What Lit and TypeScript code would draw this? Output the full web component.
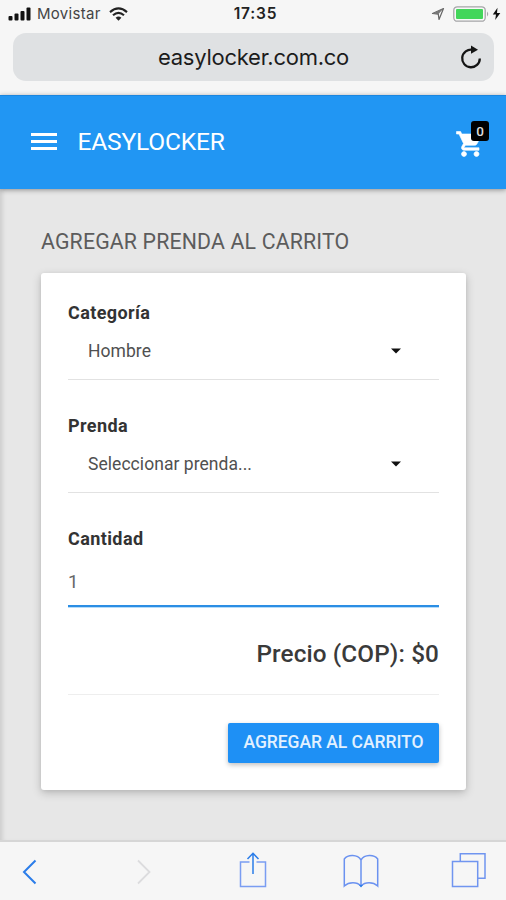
import { LitElement, html, css, svg } from "lit";
import { customElement, property, state } from "lit/decorators.js";

@customElement("status-bar")
class StatusBar extends LitElement {
  static styles = css`
    :host { display: grid; grid-template-columns: 1fr auto 1fr; align-items: center; box-sizing: border-box; height: 28px; padding: 0 5px 0 8px; font-family: Inter, sans-serif; color: #111; }
    .side { display: flex; align-items: center; height: 28px; }
    .end { justify-content: flex-end; }
    .carrier { font-size: 15px; line-height: 28px; margin-left: 6px; color: #444; letter-spacing: 0.3px; }
    .time { font-size: 15.5px; line-height: 28px; font-weight: 600; letter-spacing: 0.8px; margin-left: 2px; color: #222; }
    .wifi { margin-left: 8px; }
    .battery { margin-left: 8px; }
    svg { display: block; }
  `;
  render() {
    return html`
      <div class="side">
        <svg width="23" height="14" viewBox="0 0 23 14" fill="#111">
          <rect x=".5" y="9" width="4" height="4.5" rx="1" /><rect x="6.5" y="6.5" width="4" height="7" rx="1" />
          <rect x="12.5" y="4" width="4" height="9.5" rx="1" /><rect x="18.5" y=".5" width="4" height="13" rx="1" />
        </svg>
        <span class="carrier">Movistar</span>
        <svg class="wifi" width="19" height="14" viewBox="0 0 19 14" fill="none" stroke="#222" stroke-width="2.1">
          <path d="M1 5.1Q9.500-2.300 18 5.100" /><path d="M4 8.300Q9.500 3.300 15 8.300" />
          <path d="M6.600 10.700L9.500 13.700L12.400 10.700Q9.500 8.300 6.600 10.700Z" fill="#222" stroke="none" />
        </svg>
      </div>
      <span class="time">17:35</span>
      <div class="side end">
        <svg width="14" height="14" viewBox="0 0 14 14"><path d="M1.500 6.500L12.500 1.500L8 12.500L7.300 7.200Z" fill="none" stroke="#666" stroke-width="1.200" stroke-linejoin="round" /><path d="M12.500 1.500L7.300 7.200L1.500 6.500Z" fill="#777" /></svg>
        <svg class="battery" width="48" height="16" viewBox="0 0 48 16">
          <rect x=".8" y=".8" width="31.400" height="14.400" rx="3.500" fill="#f8f8f8" stroke="#a5a5a8" stroke-width="1.300" />
          <rect x="3" y="3" width="27" height="10" rx="1" fill="#43d65b" />
          <path d="M34 5.500Q36.500 8 34 10.500Z" fill="#a5a5a8" />
          <path d="M44.500 1.800L39.800 8.600H43L42.200 14L47.300 6.900H44Z" fill="#111" />
        </svg>
      </div>`;
  }
}

@customElement("address-bar")
class AddressBar extends LitElement {
  static styles = css`
    :host { display: block; padding: 5px 12px 14px 13px; }
    .field { display: grid; grid-template-columns: 40px 1fr 40px; align-items: center; height: 48px; border-radius: 13px; background: #dfe1e3; }
    .host { text-align: center; font: 22px/48px Inter, sans-serif; color: #1c1c1c; letter-spacing: -0.25px; grid-column: 2; }
    svg { display: block; margin-left: 5px; margin-top: 1px; }
  `;
  render() {
    return html`<div class="field">
      <span class="host">easylocker.com.co</span>
      <svg width="24" height="26" viewBox="0 0 24 26"><path d="M13.500 4.800A8.800 8.800 0 1 0 20.800 13.500" fill="none" stroke="#151515" stroke-width="2.300" /><path d="M12 .5L19 4.700L12 8.800Z" fill="#151515" /></svg>
    </div>`;
  }
}

@customElement("site-header")
class SiteHeader extends LitElement {
  @property({ type: Number }) count = 0;
  static styles = css`
    :host { display: flex; align-items: center; box-sizing: border-box; height: 94px; padding: 0 17px 2px 31px; background: #2196f3; border-top: 1px solid #1b86df; box-shadow: 0 1px 5px rgba(0, 0, 0, 0.38); position: relative; z-index: 1; font-family: Roboto, sans-serif; color: #fff; }
    .menu { display: grid; gap: 4px; width: 26px; }
    .menu i { height: 3px; background: #fff; }
    .brand { margin-left: 20.500px; font-size: 24.500px; line-height: 32px; letter-spacing: -0.15px; }
    .cart { position: relative; margin-left: auto; width: 33px; height: 40px; }
    .cart svg { display: block; margin-top: 7px; }
    .badge { position: absolute; right: 0; top: -1px; width: 18px; height: 20px; border-radius: 3px; background: #000; color: #ddd; text-align: center; font-size: 13.500px; line-height: 20px; font-weight: 500; }
  `;
  render() {
    return html`
      <div class="menu"><i></i><i></i><i></i></div>
      <span class="brand">EASYLOCKER</span>
      <div class="cart">
        <svg width="30" height="30" viewBox="0.6 0 24 24" fill="#fff" stroke="#fff" stroke-width=".5"><path d="M7 18c-1.100 0-1.990.9-1.990 2S5.900 22 7 22s2-.9 2-2-.9-2-2-2zM1 2v2h2l3.600 7.590-1.350 2.450c-.16.280-.25.610-.25.960 0 1.100.9 2 2 2h12v-2H7.420c-.14 0-.25-.11-.25-.25l.03-.12.900-1.630h7.450c.75 0 1.410-.41 1.750-1.030l3.580-6.490c.08-.14.120-.31.120-.48 0-.55-.45-1-1-1H5.210l-.94-2H1zm16 16c-1.100 0-1.990.9-1.990 2s.89 2 1.990 2 2-.9 2-2-.9-2-2-2z" /></svg>
        <span class="badge">${this.count}</span>
      </div>`;
  }
}

@customElement("select-field")
class SelectField extends LitElement {
  @property() label = "";
  @property() value = "";
  static styles = css`
    :host { display: block; height: 113px; font-family: Roboto, sans-serif; }
    .label { font-size: 18px; line-height: 24px; font-weight: 700; color: #333; letter-spacing: 0.4px; }
    .control { display: flex; align-items: center; justify-content: space-between; box-sizing: border-box; height: 55px; padding: 0 38px 3px 20px; border-bottom: 1.500px solid #e2e2e2; font-size: 17.500px; color: #505050; letter-spacing: 0.05px; }
  `;
  render() {
    return html`<div class="label">${this.label}</div>
      <div class="control"><span>${this.value}</span><svg width="10" height="6" viewBox="0 0 10 6"><path d="M0 .5H10L5 5.500Z" fill="#111" /></svg></div>`;
  }
}

@customElement("cart-form")
class CartForm extends LitElement {
  @state() private quantity = 1;
  @state() private price = 0;
  static styles = css`
    :host { display: block; box-sizing: border-box; height: 517px; padding: 28px 27px 0; background: #fff; border-radius: 3px; box-shadow: 0 3px 10px rgba(0, 0, 0, 0.2), 0 1px 4px rgba(0, 0, 0, 0.06); font-family: Roboto, sans-serif; }
    .label { font-size: 18px; line-height: 24px; font-weight: 700; color: #333; letter-spacing: 0.4px; }
    .quantity { box-sizing: border-box; height: 56px; padding-top: 7px; border-bottom: 2px solid #2b8ee4; box-shadow: 0 1px 0 #b5dcfa; font-size: 18.500px; line-height: 48px; color: #666; }
    .price { box-sizing: border-box; height: 88px; padding-top: 31px; border-bottom: 1px solid #eee; text-align: right; font-size: 24.300px; line-height: 32px; font-weight: 500; color: #3a3a3a; letter-spacing: 0.12px; }
    .actions { display: flex; justify-content: flex-end; padding-top: 28px; }
    .submit { width: 211px; height: 40px; padding: 0 0 2px; border: 0; border-radius: 2px; background: #1e90f5; color: #e2f1ff; font: 500 17.500px/38px Roboto, sans-serif; letter-spacing: -0.05px; box-shadow: 0 2px 5px rgba(0, 0, 0, 0.25); white-space: nowrap; }
  `;
  render() {
    return html`
      <select-field label="Categoría" value="Hombre"></select-field>
      <select-field label="Prenda" value="Seleccionar prenda..."></select-field>
      <div class="label">Cantidad</div>
      <div class="quantity">${this.quantity}</div>
      <div class="price">Precio (COP): $${this.price}</div>
      <div class="actions"><button class="submit">AGREGAR AL CARRITO</button></div>`;
  }
}

const icons = [
  svg`<path d="M16.500 4.500L5 16L16.500 27.500" stroke="#2b7de9" stroke-width="2" />`,
  svg`<path d="M7 4.500L18.500 16L7 27.500" stroke="#dcdcde" stroke-width="1.800" />`,
  svg`<path d="M14.500 10H5.500V34.500H30.500V10H21.500" stroke="#7a9df2" /><path d="M18 22V1.500M12.500 7L18 1.300L23.500 7" stroke="#2b7de9" />`,
  svg`<path d="M18 8C14.500 2.300 5 2.300 1.300 7V34C6 29.800 14 29.800 18 34C22 29.800 30 29.800 34.700 34V7C31 2.300 21.500 2.300 18 8V34" stroke="#6b92f0" /><path d="M16 33H20L18 35.500Z" fill="#2b7de9" />`,
  svg`<path d="M1.500 9.500H26.700V34.500H1.500ZM9.300 9.500V1.800H34V26.300H26.700" stroke="#7095f0" />`,
];

@customElement("browser-toolbar")
class BrowserToolbar extends LitElement {
  static styles = css`
    :host { display: flex; box-sizing: border-box; height: 60px; padding: 10px 0 0 19px; background: #f6f6f6; border-top: 2px solid #d6d6d6; }
    svg { display: block; flex: none; fill: none; stroke-width: 1.500; }
    .arrow { margin-top: 4px; }
    .arrow + .arrow { margin-left: 88px; margin-right: 8px; }
    .tool { margin-left: 72px; }
  `;
  render() {
    return icons.map((icon, n) => n < 2
      ? html`<svg class="arrow" width="24" height="36" viewBox="0 0 24 36">${icon}</svg>`
      : html`<svg class="tool" width="36" height="36" viewBox="0 0 36 36">${icon}</svg>`);
  }
}

@customElement("app-root")
class AppRoot extends LitElement {
  static styles = css`
    :host { display: flex; flex-direction: column; width: 506px; height: 900px; overflow: hidden; background: #f6f6f6; }
    main { flex: 1; box-sizing: border-box; padding: 37px 40px 0 41px; background: #e7e7e7; box-shadow: inset 5px 0 5px -3px rgba(0, 0, 0, 0.13); }
    h1 { margin: 0; height: 47px; font: 400 21.300px/32px Roboto, sans-serif; color: #5c5c5c; letter-spacing: 0.16px; white-space: nowrap; }
  `;
  render() {
    return html`
      <status-bar></status-bar>
      <address-bar></address-bar>
      <site-header .count=${0}></site-header>
      <main><h1>AGREGAR PRENDA AL CARRITO</h1><cart-form></cart-form></main>
      <browser-toolbar></browser-toolbar>`;
  }
}
